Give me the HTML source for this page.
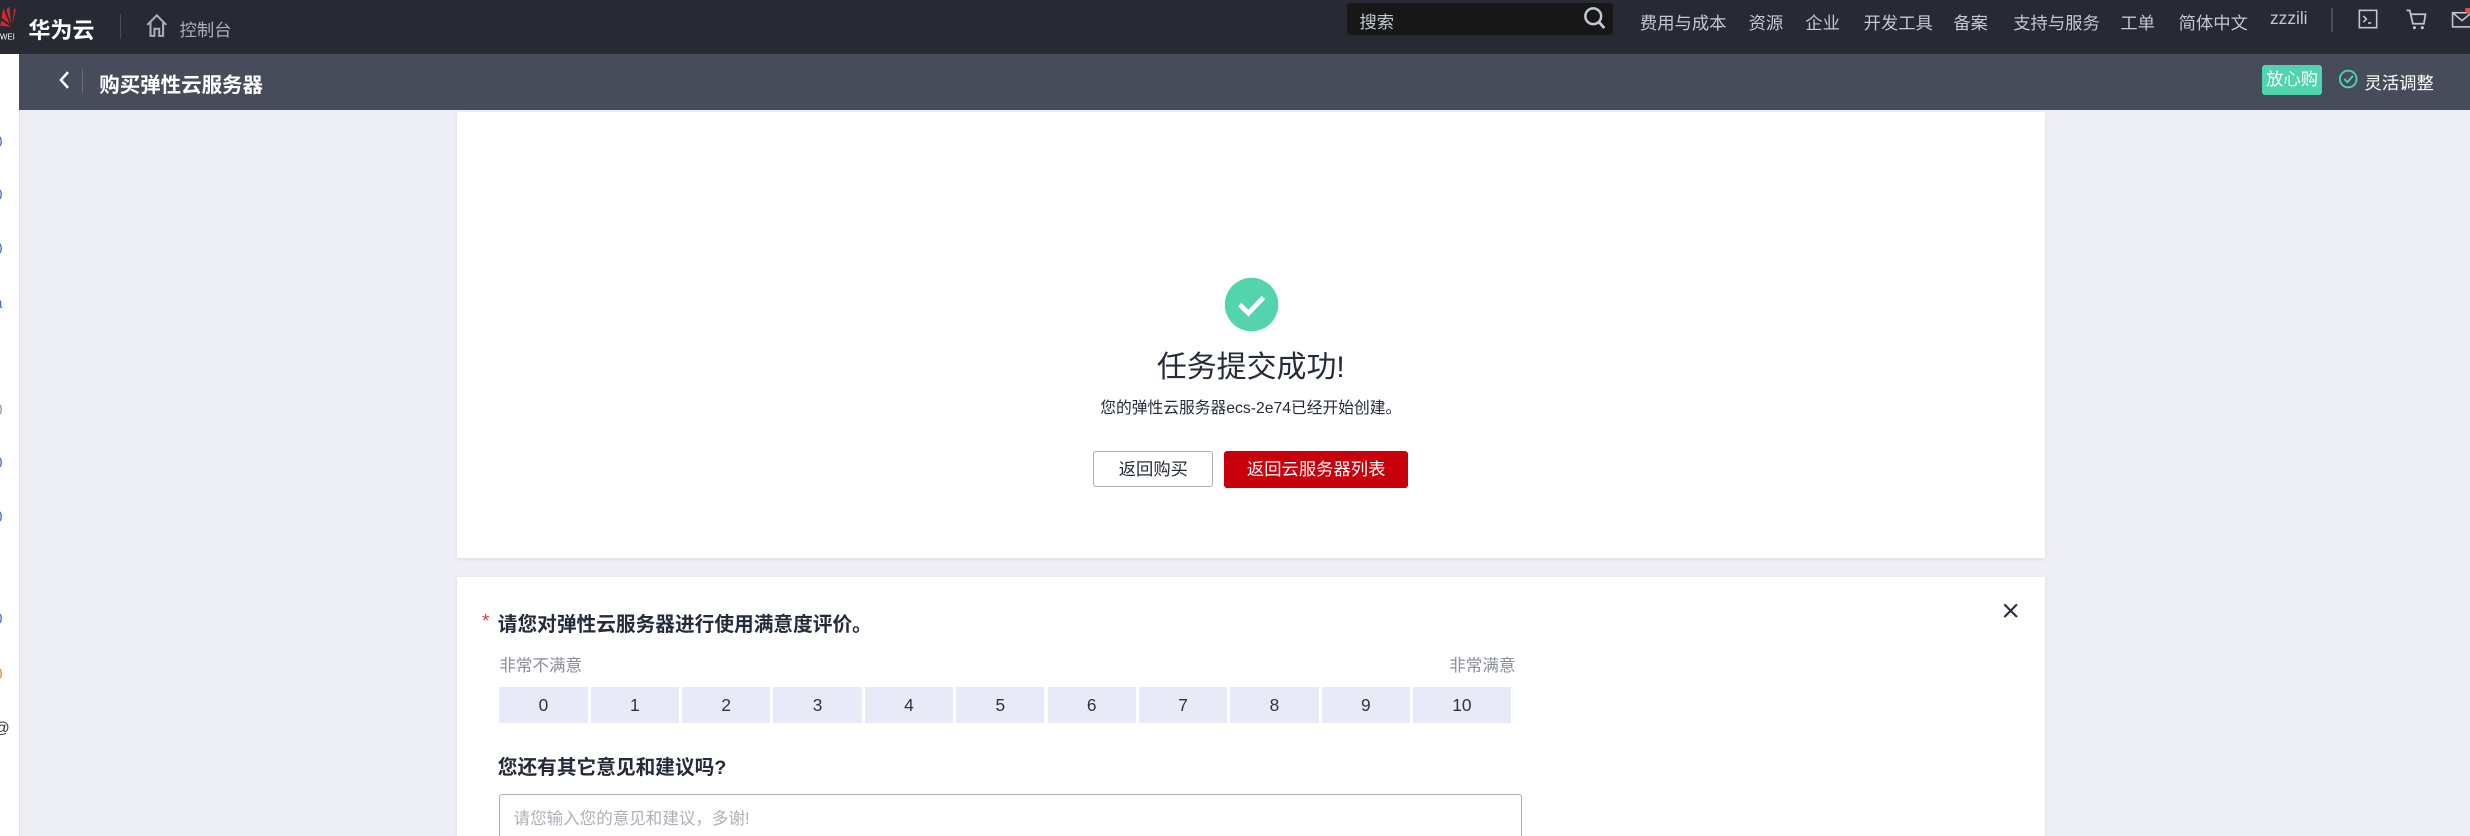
<!DOCTYPE html>
<html><head><meta charset="utf-8"><style>
html{margin:0;padding:0;width:2470px;height:836px;overflow:hidden}
body{margin:0;padding:0;width:1568px;height:531px;overflow:hidden;zoom:1.5753;background:#eeeff5;position:relative;font-family:"Liberation Sans","Noto Sans CJK SC",sans-serif}
.a{position:absolute;white-space:nowrap}
.hdr{left:0;top:0;width:1568px;height:34px;background:#272a33}
.sub{left:12px;top:34px;width:1556px;height:36px;background:#474c5a}
.side{left:0;top:34px;width:12px;height:497px;background:#fff;border-right:1px solid #dfe1e6}
.nav{top:10px;font-size:11px;color:#c3c7d0}
.card{background:#fff;left:290px;width:1008px;box-shadow:0 1px 3px rgba(0,0,0,.08)}
.box{top:436px;width:56px;height:23px;background:#e8ebf7;font-size:11px;color:#333;text-align:center;line-height:23px}
.m{position:absolute;left:-4px;font-size:10px;color:#4a6fd6}
</style></head><body>
<div class="a hdr"></div>
<svg class="a" style="left:0;top:3px" width="12" height="24" viewBox="0 0 12 24"><path d="M2 2 L6 12 L1 8Z M6 1 L7 12 L4 3Z M10 3 L8 12 L9 2Z M1 10 L7 14 L0 13Z" fill="#e0262c"/><text x="0" y="22" font-size="5" fill="#fff">WEI</text></svg>
<div class="a" style="left:18px;top:8px;font-size:14px;color:#fff;font-weight:bold">华为云</div>
<div class="a" style="left:76px;top:9px;width:1px;height:16px;background:#4a4e58"></div>
<svg class="a" style="left:92px;top:8px" width="15" height="16" viewBox="0 0 15 16"><path d="M1.5 7.5 L7.5 1.5 L13.5 7.5 M3.5 6 V14.5 H6 V10 H9 V14.5 H11.5 V6" fill="none" stroke="#aab0bb" stroke-width="1.3"/></svg>
<div class="a" style="left:114px;top:10px;font-size:11px;color:#aab0bb">控制台</div>
<div class="a" style="left:855px;top:2px;width:169px;height:20px;background:#171717;border-radius:2px"></div>
<div class="a" style="left:863px;top:5px;font-size:11px;color:#c3c7d0">搜索</div>
<svg class="a" style="left:1005px;top:4px" width="15" height="16" viewBox="0 0 15 16"><circle cx="6.5" cy="6.5" r="5" fill="none" stroke="#c3c7d0" stroke-width="1.6"/><path d="M10 10 L13.5 14" stroke="#c3c7d0" stroke-width="1.8"/></svg>
<div class="a nav" style="left:1041px;top:6px">费用与成本</div>
<div class="a nav" style="left:1110px;top:6px">资源</div>
<div class="a nav" style="left:1146px;top:6px">企业</div>
<div class="a nav" style="left:1183px;top:6px">开发工具</div>
<div class="a nav" style="left:1240px;top:6px">备案</div>
<div class="a nav" style="left:1278px;top:6px">支持与服务</div>
<div class="a nav" style="left:1346px;top:6px">工单</div>
<div class="a nav" style="left:1383px;top:6px">简体中文</div>
<div class="a nav" style="left:1441px;top:5px">zzzili</div>
<div class="a" style="left:1480px;top:5px;width:1px;height:15px;background:#4a4e58"></div>
<svg class="a" style="left:1496px;top:5px" width="14" height="14" viewBox="0 0 14 14"><rect x="1.5" y="1.5" width="11" height="11" fill="none" stroke="#c3c7d0"/><path d="M4 5 L6 7 L4 9 M7 9.5 H9" stroke="#c3c7d0" fill="none"/></svg>
<svg class="a" style="left:1527px;top:5px" width="14" height="14" viewBox="0 0 14 14"><path d="M1 1.5 H3 L5 10 H12 L13 4 H4" fill="none" stroke="#c3c7d0" stroke-width="1.1"/><circle cx="6" cy="12.5" r="1" fill="#c3c7d0"/><circle cx="11" cy="12.5" r="1" fill="#c3c7d0"/></svg>
<svg class="a" style="left:1556px;top:5px" width="12" height="14" viewBox="0 0 12 14"><rect x="1" y="3" width="12" height="9" fill="none" stroke="#c3c7d0"/><path d="M1 3 L7 8 L13 3" fill="none" stroke="#c3c7d0"/><circle cx="12" cy="1" r="3" fill="#e24c4c"/></svg>
<div class="a side"></div>
<div class="m" style="top:85px">0</div><div class="m" style="top:119px">0</div><div class="m" style="top:153px">0</div><div class="m" style="top:187px">a</div>
<div class="m" style="top:255px;color:#999">0</div><div class="m" style="top:289px">0</div><div class="m" style="top:323px">0</div><div class="m" style="top:388px">0</div><div class="m" style="top:423px;color:#d89040">0</div><div class="m" style="top:457px;color:#333">@</div>
<div class="a sub"></div>
<svg class="a" style="left:36px;top:44px" width="10" height="14" viewBox="0 0 10 14"><path d="M7 2 L2.5 7 L7 12" fill="none" stroke="#fff" stroke-width="1.6"/></svg>
<div class="a" style="left:52px;top:44px;width:1px;height:15px;background:#6a7080"></div>
<div class="a" style="left:63px;top:43px;font-size:13px;color:#fff;font-weight:bold">购买弹性云服务器</div>
<div class="a" style="left:1436px;top:41px;width:38px;height:19px;background:#4fd4ad;border-radius:2px;color:#fff;font-size:11px;line-height:19px;text-align:center">放心购</div>
<svg class="a" style="left:1484px;top:43px" width="13" height="14" viewBox="0 0 13 14"><circle cx="6.5" cy="7" r="5.3" fill="none" stroke="#4fd4ad" stroke-width="1.2"/><path d="M4 7 L6 9 L9.5 5" fill="none" stroke="#4fd4ad" stroke-width="1.2"/></svg>
<div class="a" style="left:1501px;top:44px;font-size:11px;color:#fff">灵活调整</div>
<div class="a card" style="top:71px;height:283px"></div>
<svg class="a" style="left:777px;top:176px" width="35" height="35" viewBox="0 0 35 35"><circle cx="17.5" cy="17.5" r="17" fill="#53d4ad"/><path d="M10 17.5 L15.5 23 L25 13" fill="none" stroke="#fff" stroke-width="3"/></svg>
<div class="a" style="left:0;width:1588px;text-align:center;top:217px;font-size:19px;color:#252b3a">任务提交成功!</div>
<div class="a" style="left:0;width:1588px;text-align:center;top:251px;font-size:10px;color:#252b3a">您的弹性云服务器ecs-2e74已经开始创建。</div>
<div class="a" style="left:694px;top:286px;width:75px;height:22px;border:1px solid #adb0b8;border-radius:2px;font-size:11px;color:#252b3a;text-align:center;line-height:22px">返回购买</div>
<div class="a" style="left:777px;top:286px;width:117px;height:24px;background:#c7000b;border-radius:2px;font-size:11px;color:#fff;text-align:center;line-height:24px">返回云服务器列表</div>
<div class="a card" style="top:366px;height:170px"></div>
<div class="a" style="left:306px;top:388px;font-size:12px;color:#e03838">*</div>
<div class="a" style="left:316px;top:386px;font-size:12.5px;color:#252b3a;font-weight:bold">请您对弹性云服务器进行使用满意度评价。</div>
<svg class="a" style="left:1271px;top:382px" width="11" height="11" viewBox="0 0 11 11"><path d="M1.5 1.5 L9.5 9.5 M9.5 1.5 L1.5 9.5" stroke="#252b3a" stroke-width="1.3"/></svg>
<div class="a" style="left:317px;top:414px;font-size:10.5px;color:#8a8e99">非常不满意</div>
<div class="a" style="left:920px;top:414px;font-size:10.5px;color:#8a8e99">非常满意</div>
<div class="a box" style="left:317px">0</div><div class="a box" style="left:375px">1</div><div class="a box" style="left:433px">2</div><div class="a box" style="left:491px">3</div><div class="a box" style="left:549px">4</div><div class="a box" style="left:607px">5</div><div class="a box" style="left:665px">6</div><div class="a box" style="left:723px">7</div><div class="a box" style="left:781px">8</div><div class="a box" style="left:839px">9</div><div class="a box" style="left:897px;width:62px">10</div>
<div class="a" style="left:316px;top:477px;font-size:12.5px;color:#252b3a;font-weight:bold">您还有其它意见和建议吗?</div>
<div class="a" style="left:317px;top:504px;width:648px;height:40px;border:1px solid #adb0b8;border-radius:2px"></div>
<div class="a" style="left:326px;top:511px;font-size:10.5px;color:#adb0b8">请您输入您的意见和建议，多谢!</div>
</body></html>
